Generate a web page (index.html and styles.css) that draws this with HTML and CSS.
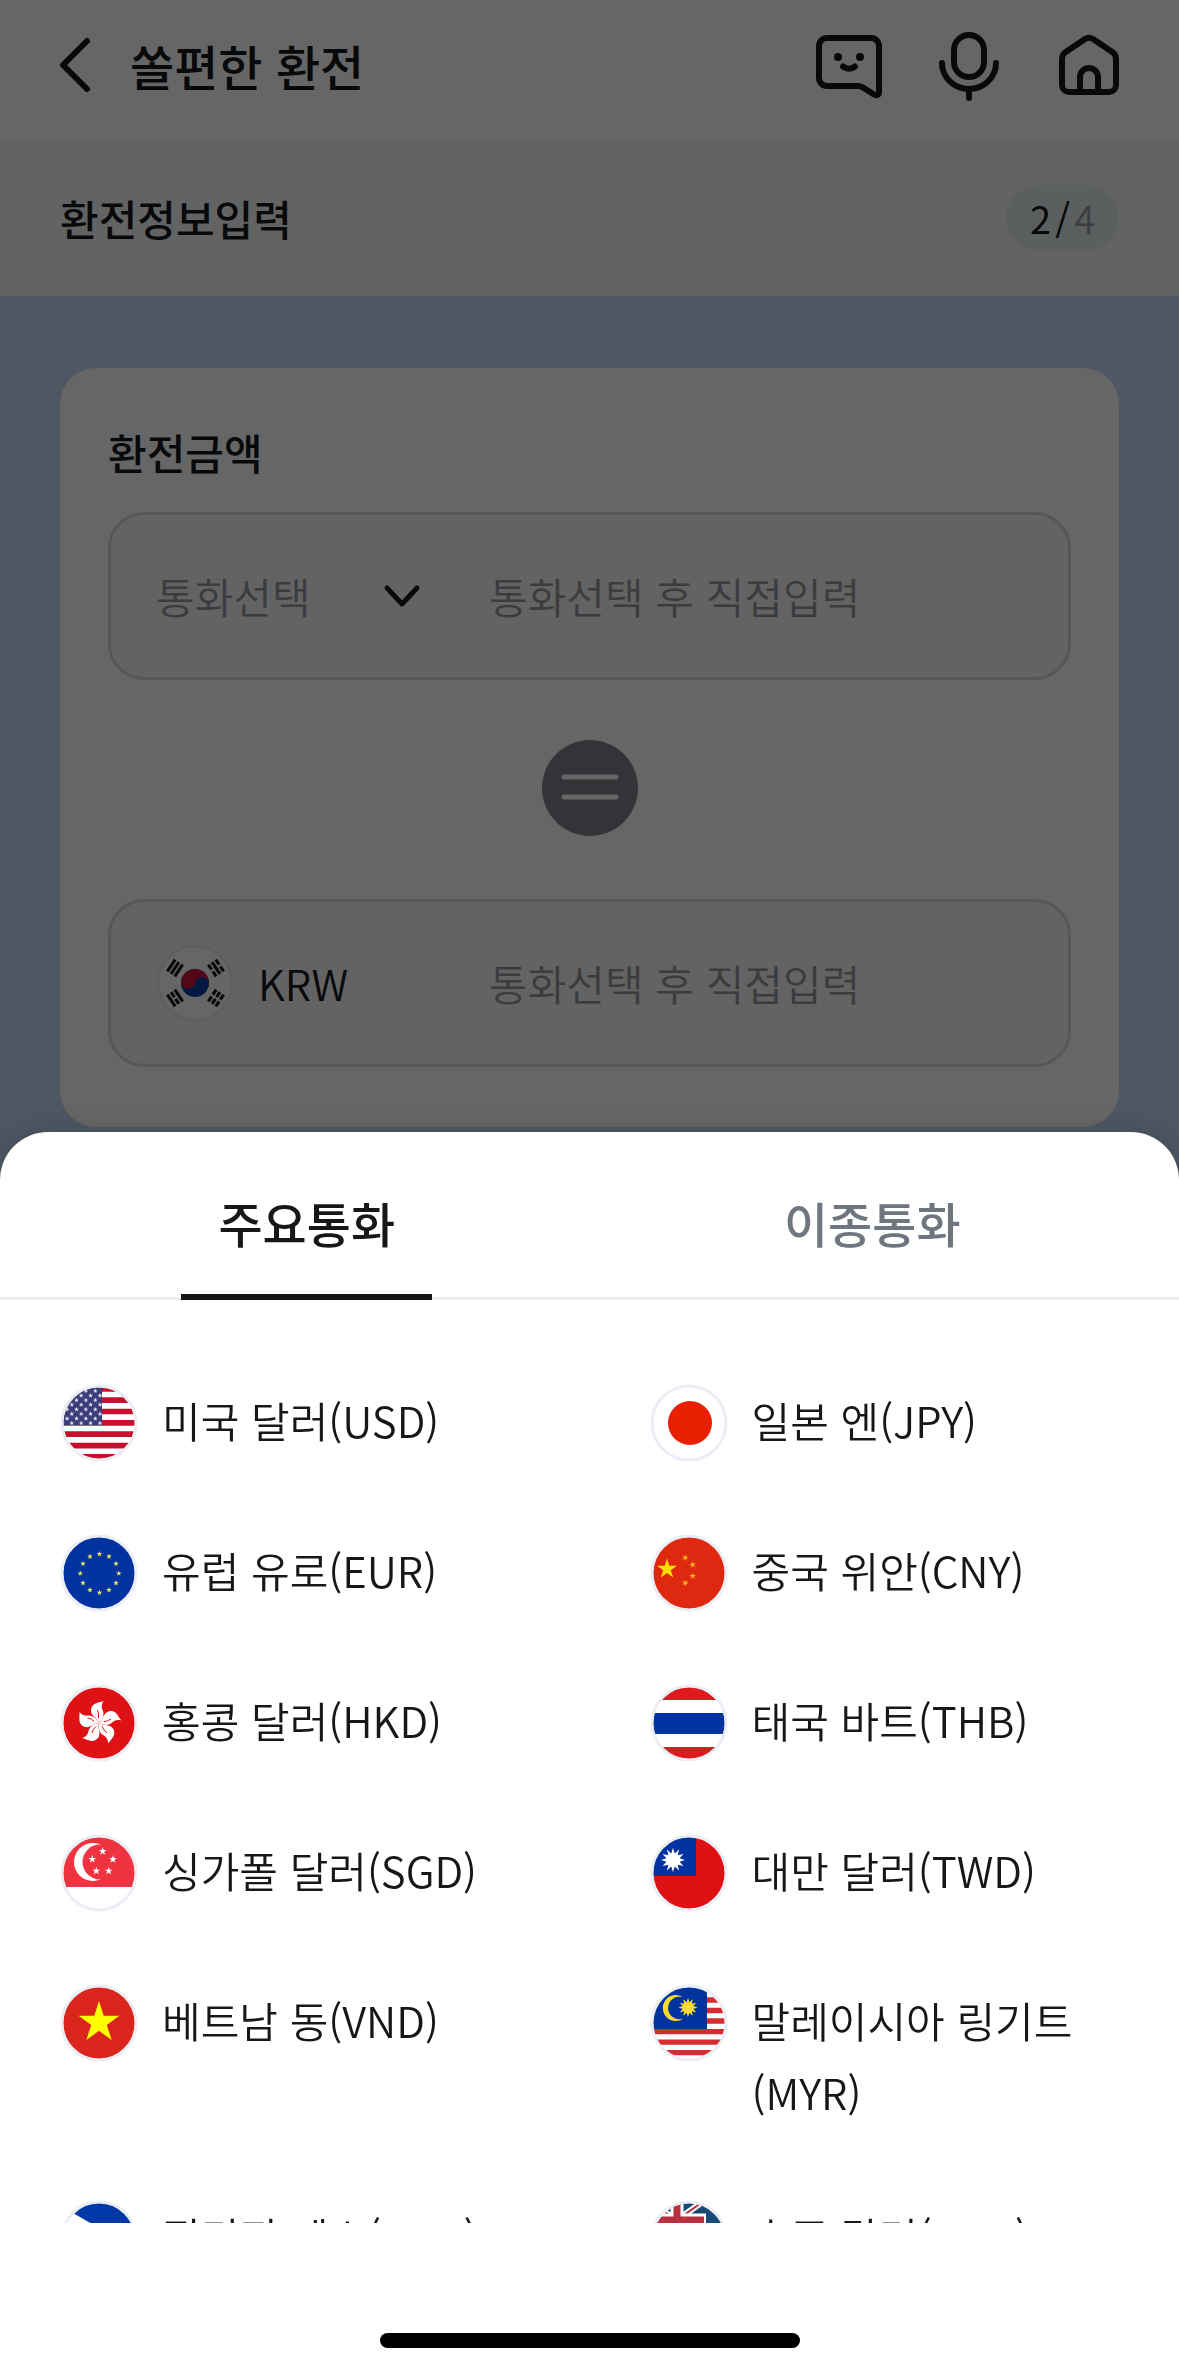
FILE: index.html
```html
<!DOCTYPE html>
<html lang="ko">
<head>
  <meta charset="UTF-8" />
  <meta name="viewport" content="width=device-width, initial-scale=1.0" />
  <title>쏠편한 환전</title>
  <link rel="stylesheet" href="styles.css">
</head>
<body>
  <!-- shared shapes for the flags -->
  <svg class="defs" width="0" height="0" aria-hidden="true">
    <defs>
      <clipPath id="round"><circle cx="39" cy="39" r="36" /></clipPath>
      <path id="star" d="M0-10L2.2-3.1H9.5L3.6 1.2 5.9 8.1 0 3.8-5.9 8.1-3.6 1.2-9.5-3.1H-2.2Z" />
      <path id="burst" d="M0-10L1.500-5.500 5-8.700 4-4 8.700-5 5.500-1.500 10 0 5.500 1.500 8.700 5 4 4 5 8.700 1.500 5.500 0 10-1.500 5.500-5 8.700-4 4-8.700 5-5.500 1.500-10 0-5.500-1.500-8.700-5-4-4-5-8.700-1.500-5.500Z" />
      <path id="petal" d="M39 39C38 34 30 32 31 25.500C32 19 38 19 43.500 17C41 21 41.500 24 43 27C44.500 32 42 36 39 39Z" />
      <pattern id="us-stars" width="9.400" height="9.200" patternUnits="userSpaceOnUse">
        <use href="#star" transform="translate(2.400 2.300) scale(.25)" fill="#fff" />
        <use href="#star" transform="translate(7.100 6.900) scale(.25)" fill="#fff" />
      </pattern>
    </defs>
  </svg>

  <header class="topbar">
    <button type="button" class="icon-btn" aria-label="뒤로">
      <svg width="40" height="72" viewBox="0 0 40 72"><path d="M33 12L9 36L33 60" /></svg>
    </button>
    <h1>쏠편한 환전</h1>
    <nav class="topbar-actions">
      <button type="button" class="icon-btn" aria-label="챗봇">
        <svg width="72" height="72" viewBox="0 0 72 72">
          <path d="M14 9H58A8 8 0 0 1 66 17V63C66 66 63.500 67 61 65.500L50 58.500Q47.500 57 45 57H14A8 8 0 0 1 6 49V17A8 8 0 0 1 14 9Z" />
          <path d="M30 37.500Q36 42 42 37.500" />
          <circle class="dot" cx="25" cy="28" r="4" /><circle class="dot" cx="47" cy="28" r="4" />
        </svg>
      </button>
      <button type="button" class="icon-btn" aria-label="음성">
        <svg width="72" height="72" viewBox="0 0 72 72">
          <rect x="21" y="6" width="30" height="42" rx="15" />
          <path d="M9 34A27 26 0 0 0 63 34M36 60V69" />
        </svg>
      </button>
      <button type="button" class="icon-btn" aria-label="홈">
        <svg width="72" height="72" viewBox="0 0 72 72">
          <path d="M9 56V30Q9 26 12 23.500L32 10Q36 7.500 40 10L60 23.500Q63 26 63 30V56A7 7 0 0 1 56 63H16A7 7 0 0 1 9 56Z" />
          <path d="M27 63V48A9 9 0 0 1 45 48V63" />
        </svg>
      </button>
    </nav>
  </header>

  <div class="step">
    <h2>환전정보입력</h2>
    <p class="step-count"><b>2</b><b>/</b><span>4</span></p>
  </div>

  <main class="content">
    <form class="card">
      <h3>환전금액</h3>
      <div class="field">
        <div class="field-currency">
          <select class="currency-select" aria-label="통화선택">
            <option>통화선택</option>
          </select>
          <svg class="chevron" width="42" height="30" viewBox="0 0 42 30"><path d="M6 7L21 23L36 7" /></svg>
        </div>
        <input type="text" aria-label="외화 금액" placeholder="통화선택 후 직접입력" />
      </div>

      <div class="equal">
        <svg width="96" height="96" viewBox="0 0 96 96"><path d="M22 37H74M22 57H74" /></svg>
      </div>

      <div class="field">
        <div class="field-currency">
          <svg class="flag" width="78" height="78" viewBox="0 0 78 78">
            <circle cx="39" cy="39" r="36" fill="#fff" />
            <circle cx="39" cy="39" r="14" fill="#003da5" />
            <path d="M25 39A14 14 0 0 1 53 39A7 7 0 0 0 39 39A7 7 0 0 1 25 39Z" fill="#d6133a" transform="rotate(10 39 39)" />
            <g stroke="#111" stroke-width="3">
              <path d="M-7-4.500H7M-7 0H7M-7 4.500H7" transform="translate(19 24) rotate(-56)" />
              <path d="M-7-4.500H-1M1-4.500H7M-7 0H7M-7 4.500H-1M1 4.500H7" transform="translate(60 24) rotate(56)" />
              <path d="M-7-4.500H7M-7 0H-1M1 0H7M-7 4.500H7" transform="translate(19 54) rotate(56)" />
              <path d="M-7-4.500H-1M1-4.500H7M-7 0H-1M1 0H7M-7 4.500H-1M1 4.500H7" transform="translate(60 54) rotate(-56)" />
            </g>
            <circle class="ring" cx="39" cy="39" r="37" />
          </svg>
          <span class="currency-code">KRW</span>
        </div>
        <input type="text" aria-label="원화 금액" placeholder="통화선택 후 직접입력" />
      </div>
    </form>
  </main>

  <div class="dim"></div>

  <section class="sheet" role="dialog" aria-label="통화 선택">
    <div class="tabs" role="tablist">
      <button type="button" class="tab active" role="tab" aria-selected="true"><span>주요통화</span></button>
      <button type="button" class="tab" role="tab" aria-selected="false"><span>이종통화</span></button>
    </div>

    <div class="currency-list">
      <button type="button" class="currency">
        <svg class="flag" width="78" height="78" viewBox="0 0 78 78">
          <g clip-path="url(#round)">
            <rect width="78" height="78" fill="#fff" />
            <path d="M0 4.800H78M0 16.200H78M0 27.500H78M0 38.800H78M0 50.200H78M0 61.600H78M0 72.900H78" stroke="#c8102e" stroke-width="5.700" />
            <rect width="42" height="41" fill="#3c3b7a" />
            <rect width="42" height="41" fill="url(#us-stars)" />
          </g>
          <circle class="ring" cx="39" cy="39" r="37" />
        </svg>
        <span>미국 달러(USD)</span>
      </button>
      <button type="button" class="currency">
        <svg class="flag" width="78" height="78" viewBox="0 0 78 78">
          <circle cx="39" cy="39" r="36" fill="#fff" />
          <circle cx="40" cy="39" r="22" fill="#e81f00" />
          <circle class="ring" cx="39" cy="39" r="37" />
        </svg>
        <span>일본 엔(JPY)</span>
      </button>

      <button type="button" class="currency">
        <svg class="flag" width="78" height="78" viewBox="0 0 78 78">
          <circle cx="39" cy="39" r="36" fill="#0033a0" />
          <g fill="#f2e85c">
            <use href="#star" transform="translate(39.500 20) scale(.3)" />
            <use href="#star" transform="translate(49 22.500) scale(.3)" />
            <use href="#star" transform="translate(56 29.700) scale(.3)" />
            <use href="#star" transform="translate(58.800 39.400) scale(.3)" />
            <use href="#star" transform="translate(56 49) scale(.3)" />
            <use href="#star" transform="translate(49 56) scale(.3)" />
            <use href="#star" transform="translate(39.500 58.700) scale(.3)" />
            <use href="#star" transform="translate(30 56) scale(.3)" />
            <use href="#star" transform="translate(23 49) scale(.3)" />
            <use href="#star" transform="translate(20.300 39.400) scale(.3)" />
            <use href="#star" transform="translate(23 29.700) scale(.3)" />
            <use href="#star" transform="translate(30 22.500) scale(.3)" />
          </g>
          <circle class="ring" cx="39" cy="39" r="37" />
        </svg>
        <span>유럽 유로(EUR)</span>
      </button>
      <button type="button" class="currency">
        <svg class="flag" width="78" height="78" viewBox="0 0 78 78">
          <circle cx="39" cy="39" r="36" fill="#de2910" />
          <use href="#star" transform="translate(17 35) scale(1.050)" fill="#ffde00" />
          <g fill="#f7b51b">
            <use href="#star" transform="translate(35.300 23.700) rotate(20) scale(.36)" />
            <use href="#star" transform="translate(42.700 30.700) rotate(-10) scale(.36)" />
            <use href="#star" transform="translate(42.700 42) scale(.36)" />
            <use href="#star" transform="translate(35.300 49) rotate(20) scale(.36)" />
          </g>
          <circle class="ring" cx="39" cy="39" r="37" />
        </svg>
        <span>중국 위안(CNY)</span>
      </button>

      <button type="button" class="currency">
        <svg class="flag" width="78" height="78" viewBox="0 0 78 78">
          <circle cx="39" cy="39" r="36" fill="#de1115" />
          <g fill="#fff">
            <use href="#petal" />
            <use href="#petal" transform="rotate(72 39 39)" />
            <use href="#petal" transform="rotate(144 39 39)" />
            <use href="#petal" transform="rotate(216 39 39)" />
            <use href="#petal" transform="rotate(288 39 39)" />
          </g>
          <path d="M38.500 34Q39 30 37.500 26M43.500 37.500Q47 38 51 35M42 42.500Q43.500 46 47 49M36 42.500Q33 44.500 32 49M34 37.500Q32 34.500 27.500 34" fill="none" stroke="#de1115" stroke-width="1" />
          <circle class="ring" cx="39" cy="39" r="37" />
        </svg>
        <span>홍콩 달러(HKD)</span>
      </button>
      <button type="button" class="currency">
        <svg class="flag" width="78" height="78" viewBox="0 0 78 78">
          <g clip-path="url(#round)">
            <rect width="78" height="78" fill="#de1a1f" />
            <rect y="16" width="78" height="47" fill="#fff" />
            <rect y="29" width="78" height="21" fill="#0033a0" />
          </g>
          <circle class="ring" cx="39" cy="39" r="37" />
        </svg>
        <span>태국 바트(THB)</span>
      </button>

      <button type="button" class="currency">
        <svg class="flag" width="78" height="78" viewBox="0 0 78 78">
          <g clip-path="url(#round)">
            <rect width="78" height="78" fill="#fff" />
            <rect width="78" height="53" fill="#ef3340" />
            <circle cx="33" cy="28" r="19" fill="#fff" />
            <circle cx="40" cy="28" r="17.500" fill="#ef3340" />
            <g fill="#fff">
              <use href="#star" transform="translate(42.700 17.300) scale(.42)" />
              <use href="#star" transform="translate(32.300 25.300) scale(.42)" />
              <use href="#star" transform="translate(53 25.300) scale(.42)" />
              <use href="#star" transform="translate(36.300 37) scale(.42)" />
              <use href="#star" transform="translate(48.700 37) scale(.42)" />
            </g>
          </g>
          <circle class="ring" cx="39" cy="39" r="37" />
        </svg>
        <span>싱가폴 달러(SGD)</span>
      </button>
      <button type="button" class="currency">
        <svg class="flag" width="78" height="78" viewBox="0 0 78 78">
          <g clip-path="url(#round)">
            <rect width="78" height="78" fill="#de1115" />
            <rect width="46" height="42" fill="#0033a0" />
            <use href="#burst" transform="translate(23 26) scale(1.200)" fill="#fff" />
          </g>
          <circle class="ring" cx="39" cy="39" r="37" />
        </svg>
        <span>대만 달러(TWD)</span>
      </button>

      <button type="button" class="currency">
        <svg class="flag" width="78" height="78" viewBox="0 0 78 78">
          <circle cx="39" cy="39" r="36" fill="#da251d" />
          <use href="#star" transform="translate(39 38.500) scale(2.150)" fill="#ff0" />
          <circle class="ring" cx="39" cy="39" r="37" />
        </svg>
        <span>베트남 동(VND)</span>
      </button>
      <button type="button" class="currency">
        <svg class="flag" width="78" height="78" viewBox="0 0 78 78">
          <g clip-path="url(#round)">
            <rect width="78" height="78" fill="#fff" />
            <path d="M0 16H78M0 26.500H78M0 37H78M0 47.600H78M0 58.100H78M0 68.700H78" stroke="#d62b30" stroke-width="5.300" />
            <rect width="57" height="45" fill="#0033a0" />
            <path d="M33.500 13.500A13 13 0 1 0 33.500 34.500A11.300 11.300 0 1 1 33.500 13.500Z" fill="#fedb2e" />
            <use href="#burst" transform="translate(38 23.500) scale(.95)" fill="#fedb2e" />
          </g>
          <circle class="ring" cx="39" cy="39" r="37" />
        </svg>
        <span>말레이시아 링기트(MYR)</span>
      </button>

      <button type="button" class="currency">
        <svg class="flag" width="78" height="78" viewBox="0 0 78 78">
          <g clip-path="url(#round)">
            <rect width="78" height="39" fill="#0038a8" />
            <rect y="39" width="78" height="39" fill="#ce1126" />
            <path d="M0 5.500L58 39L0 72.500Z" fill="#fff" />
            <circle cx="20" cy="39" r="7" fill="#fcd116" />
          </g>
          <circle class="ring" cx="39" cy="39" r="37" />
        </svg>
        <span>필리핀 페소(PHP)</span>
      </button>
      <button type="button" class="currency">
        <svg class="flag" width="78" height="78" viewBox="0 0 78 78">
          <g clip-path="url(#round)">
            <rect width="78" height="78" fill="#174a74" />
            <path d="M2 4L27 20L58-2M2 38L27 20L54 38" fill="none" stroke="#fff" stroke-width="6" />
            <path d="M2 4L27 20L58-2" fill="none" stroke="#b9303f" stroke-width="2" />
            <path d="M27 0V40M0 20H56" stroke="#fff" stroke-width="13" />
            <path d="M27 0V40M0 20H54" stroke="#b9303f" stroke-width="7" />
          </g>
          <circle class="ring" cx="39" cy="39" r="37" />
        </svg>
        <span>호주 달러(AUD)</span>
      </button>
    </div>

    <div class="home-area"><div class="home-bar"></div></div>
  </section>
</body>
</html>
```
FILE: styles.css
```css
* { box-sizing: border-box; }
body { margin: 0; min-height: 100vh; background: #c2daf4; color: #151719; font-family: "Noto Sans CJK KR", sans-serif; font-size: 42px; line-height: 72px; overflow: hidden; }
h1, h2, h3, p { margin: 0; }
h1, h2, h3 { font-weight: 500; }
button, input, select { font: inherit; color: inherit; background: none; border: none; padding: 0; }
button { cursor: pointer; }
svg { display: block; flex: none; }
.defs { position: absolute; }

/* header */
.topbar { display: flex; align-items: center; background: #fff; padding: 29px 54px 39px; }
.topbar h1 { font-size: 48px; margin-left: 36px; }
.topbar-actions { display: flex; gap: 48px; margin-left: auto; }
.icon-btn svg { fill: none; stroke: #151719; stroke-width: 6; stroke-linecap: round; stroke-linejoin: round; }
.icon-btn .dot { fill: #151719; stroke: none; }

.step { display: flex; align-items: center; justify-content: space-between; padding: 42px 60px; background: #f8f7fb; }
.step h2, .card h3 { font-size: 42px; }
.step-count { display: flex; gap: 4px; padding: 0 24px; border-radius: 33px; background: #e4eef0; font-size: 38px; line-height: 66px; }
.step-count b { font-weight: 400; }
.step-count span { color: #9a9ca3; font-weight: 350; }

/* amount form */
.content { padding: 72px 60px; }
.card { background: #fff; border-radius: 36px; padding: 48px 48px 60px; }
.card h3 { margin-bottom: 24px; }
.field { display: flex; align-items: center; height: 168px; border: 3px solid #d6d9de; border-radius: 36px; background: #f8f7fb; padding: 0 45px; font-weight: 350; }
.field-currency { display: flex; align-items: center; width: 333px; flex: none; }
.field input { flex: 1; min-width: 0; outline: none; }
.field input::placeholder { color: #94969b; opacity: 1; }
.currency-select { appearance: none; width: 225px; color: #94969b; }
.currency-code { margin-left: 24px; }
.chevron path { fill: none; stroke: #151719; stroke-width: 5; stroke-linecap: round; stroke-linejoin: round; }
.equal { width: 96px; margin: 60px auto 63px; border-radius: 50%; background: #80828b; }
.equal path { stroke: #fff; stroke-width: 5; stroke-linecap: round; }

.dim { position: fixed; inset: 0; background: rgba(0,0,0,0.6); }

/* bottom sheet */
.sheet { position: fixed; left: 0; right: 0; bottom: 0; display: flex; flex-direction: column; max-height: 1240px; background: #fff; border-radius: 48px 48px 0 0; box-shadow: 0 0 30px rgba(0,0,0,0.15); }
.tabs { display: flex; flex: none; padding: 0 24px; box-shadow: inset 0 -3px #eceef1; }
.tab { flex: 1; font-size: 48px; font-weight: 500; color: #6f7680; }
.tab span { display: inline-block; padding: 54px 37px 36px; border-bottom: 6px solid transparent; }
.tab.active { color: #151719; }
.tab.active span { border-color: #151719; }

.currency-list { display: grid; grid-template-columns: 1fr 1fr; row-gap: 72px; flex: 1; min-height: 0; padding: 84px 0 60px; overflow-y: auto; scrollbar-width: none; }
.currency { display: flex; align-items: flex-start; gap: 24px; padding: 0 48px 0 60px; text-align: left; font-weight: 350; }
.ring { fill: none; stroke: #eceef6; stroke-width: 3; }

.home-area { flex: none; padding: 110px 0 24px; }
.home-bar { width: 420px; height: 15px; margin: 0 auto; border-radius: 8px; background: #000; }
```
